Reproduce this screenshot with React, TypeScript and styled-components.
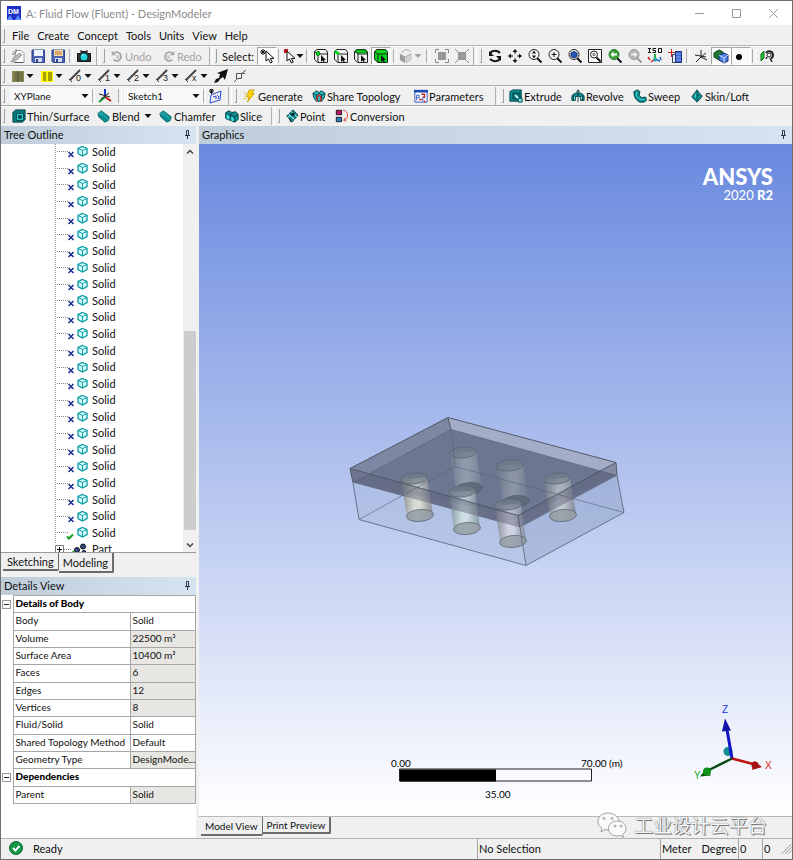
import React from "react";
import styled, { createGlobalStyle } from "styled-components";

const Global = createGlobalStyle`
  * { box-sizing: border-box; }
  html, body { margin: 0; height: 100%; }
  #root { height: 100%; }
  body, button, select, input {
    font-family: Lato, "Open Sans", sans-serif;
    font-size: 11px;
    color: #111;
  }
`;

const Window = styled.div`
  height: 100vh;
  display: flex;
  flex-direction: column;
  background: #f0f0f0;
  border: 1px solid #6e6e6e;
  overflow: hidden;
`;
const TitleBar = styled.header`
  flex: none;
  height: 24px;
  background: #fff;
  display: flex;
  align-items: center;
  padding-left: 6px;
  color: #8c8c8c;
`;
const TitleText = styled.h1`
  flex: 1;
  margin: 0 0 0 5px;
  font-size: 11px;
  font-weight: 400;
`;
const CaptionButton = styled.button`
  width: 37px;
  height: 24px;
  border: 0;
  padding: 0;
  background: none;
  display: grid;
  place-items: center;
`;
const Grip = styled.i<{ $gap?: number }>`
  flex: none;
  align-self: center;
  width: 2px;
  height: 14px;
  margin-left: 2px;
  margin-right: ${(p) => p.$gap ?? 4}px;
  border-right: 1px solid #a0a0a0;
  border-bottom: 1px solid #a0a0a0;
`;
const MenuBar = styled.nav`
  flex: none;
  height: 21px;
  display: flex;
  align-items: center;
  padding-top: 1px;
  border-bottom: 1px solid #b4b4b4;
`;
const MenuItem = styled.button`
  flex: none;
  border: 0;
  background: none;
  padding: 0 4px;
  line-height: 16px;
`;
const Bar = styled.div`
  flex: none;
  height: 20px;
  display: flex;
  align-items: center;
  border-top: 1px solid #fafafa;
  border-bottom: 1px solid #a8a8a8;
  &:last-of-type { border-bottom-color: #f0f0f0; }
`;
const Tool = styled.button<{ $w?: number; $on?: boolean; $off?: boolean }>`
  flex: none;
  display: flex;
  align-items: center;
  justify-content: ${(p) => (p.$w ? "flex-start" : "center")};
  width: ${(p) => p.$w ?? 20}px;
  height: 18px;
  padding: 0;
  white-space: nowrap;
  border: ${(p) => (p.$on ? "1px solid #a5a5a5" : "0")};
  border-right-color: #fff;
  border-bottom-color: #fff;
  background: ${(p) => (p.$on ? "#fafafa" : "none")};
  color: ${(p) => (p.$off ? "#a3a3a3" : "#111")};
  svg { flex: none; }
`;
const LabelTool = styled(Tool)`
  svg { width: 14px; height: 14px; margin-right: 1px; }
`;
const Divider = styled.i<{ $w: number; $end?: boolean }>`
  flex: none;
  width: ${(p) => p.$w}px;
  height: ${(p) => (p.$end ? 18 : 14)}px;
  display: flex;
  justify-content: center;
  &::before {
    content: "";
    width: 2px;
    border-left: 1px solid #b0b0b0;
    border-right: 1px solid #fff;
  }
`;
const BarLabel = styled.span`
  flex: none;
  width: 35px;
`;
const Combo = styled.label<{ $w: number }>`
  flex: none;
  width: ${(p) => p.$w}px;
  height: 17px;
  display: flex;
  align-items: center;
  padding-right: 3px;
  background: #f8f8f8;
  select {
    flex: 1;
    min-width: 0;
    border: 0;
    padding: 0 4px;
    background: none;
    appearance: none;
    font-size: 10px;
  }
`;
const Body = styled.main`
  flex: 1;
  min-height: 0;
  display: grid;
  grid-template-columns: 195px minmax(0, 1fr);
  column-gap: 3px;
`;
const Side = styled.aside`
  min-height: 0;
  display: flex;
  flex-direction: column;
`;
const PaneHead = styled.h2`
  flex: none;
  height: 18px;
  margin: 0;
  padding: 0 5px 2px 3px;
  display: flex;
  align-items: center;
  justify-content: space-between;
  background: linear-gradient(90deg, #bfcddb, #d6e4f2);
  font-size: 11px;
  font-weight: 400;
`;
const TreePane = styled.div`
  flex: none;
  height: 409px;
  display: flex;
  overflow: hidden;
  background: #fff;
  border-bottom: 1px solid #9a9a9a;
`;
const Tree = styled.ul`
  flex: 1;
  height: 414px;
  margin: 0 0 0 54px;
  padding: 0;
  list-style: none;
  display: flex;
  flex-direction: column;
  background: repeating-linear-gradient(180deg, #999 0 1px, #fff 1px 2px) 0 0 / 1px 400px no-repeat;
`;
const Node = styled.li`
  flex: 1;
  min-height: 0;
  display: flex;
  align-items: center;
  padding-bottom: 2px;
  svg { flex: none; margin-right: 4px; }
`;
const ScrollBar = styled.div`
  flex: none;
  width: 13px;
  display: flex;
  flex-direction: column;
  align-items: center;
  background: #f0f0f0;
`;
const ScrollArrow = styled.button`
  width: 12px;
  height: 14px;
  border: 0;
  padding: 0;
  background: none;
  display: grid;
  place-items: center;
`;
const Thumb = styled.div`
  width: 12px;
  height: 199px;
  margin-top: auto;
  margin-bottom: 8px;
  background: #cdcdcd;
`;
const Tabs = styled.div`
  flex: none;
  height: 24px;
  display: flex;
  align-items: flex-start;
  padding-left: 2px;
`;
const Tab = styled.button<{ $active?: boolean }>`
  height: ${(p) => (p.$active ? 20 : 18)}px;
  padding: 0 4px;
  background: #f0f0f0;
  border: 0 solid #6c6c6c;
  border-bottom-width: 2px;
  border-right-width: ${(p) => (p.$active ? 2 : 1)}px;
  border-radius: 0 0 2px 0;
`;
const Details = styled.div`
  flex: 1;
  min-height: 0;
  background: #fff;
`;
const Grid = styled.table`
  width: 100%;
  height: 209px;
  border-collapse: collapse;
  table-layout: fixed;
  font-size: 10px;
  td, th {
    padding: 0 0 2px 2px;
    line-height: 14px;
    border: 1px solid #a6a6a6;
    text-align: left;
    white-space: nowrap;
    font-weight: 400;
    overflow: hidden;
  }
`;
const Toggle = styled.td`
  && {
    border-width: 0 1px 0 0;
    padding: 0 0 0 1px;
    overflow: visible;
  }
`;
const ToggleButton = styled.button`
  width: 9px;
  height: 9px;
  padding: 0;
  background: #fff;
  border: 1px solid #999;
  display: grid;
  place-items: center;
  &::before { content: ""; width: 5px; height: 1px; background: #222; }
`;
const Section = styled.th`
  && { font-weight: 900; color: #000; }
`;
const Value = styled.td<{ $locked: boolean }>`
  background: ${(p) => (p.$locked ? "#e7e6e2" : "#fff")};
`;
const Stage = styled.section`
  min-width: 0;
  min-height: 0;
  display: flex;
  flex-direction: column;
`;
const Viewport = styled.div`
  flex: 1;
  min-height: 0;
  background: linear-gradient(180deg, #6989df, #fff);
  svg { display: block; width: 100%; height: 100%; }
`;
const ViewTabs = styled.div`
  flex: none;
  height: 22px;
  position: relative;
  display: flex;
  align-items: flex-start;
  border-top: 1px solid #b8b8b8;
  padding-left: 2px;
`;
const ViewTab = styled(Tab)`
  height: ${(p) => (p.$active ? 19 : 17)}px;
  font-size: 10px;
  border-right-width: ${(p) => (p.$active ? 1 : 2)}px;
`;
const Watermark = styled.div`
  position: absolute;
  right: 25px;
  top: -7px;
  display: flex;
  align-items: center;
  gap: 7px;
  font: 19px/30px "Noto Sans CJK SC", sans-serif;
  color: #f6f6f6;
  text-shadow: 1px 1px 0 #777, 0 0 1px #555;
`;
const Status = styled.footer`
  flex: none;
  height: 21px;
  display: flex;
  align-items: stretch;
  border-top: 1px solid #b0b0b0;
`;
const Cell = styled.span<{ $w?: number }>`
  flex: ${(p) => (p.$w ? "none" : "1")};
  width: ${(p) => (p.$w ? p.$w + "px" : "auto")};
  display: flex;
  align-items: center;
  gap: 10px;
  padding: 0 0 2px 1px;
  border-left: 1px solid #a5a5a5;
  white-space: nowrap;
  &:first-child { border-left: 0; padding-left: 8px; }
`;

const T = "#0b8f92";
const D = "#06393d";
const G = "#8a8a8a";

function Svg({ children, w = 16 }: { children: React.ReactNode; w?: number }) {
  return (
    <svg width={w} height="16" viewBox={`0 0 ${w} 16`} fill="none" aria-hidden="true">
      {children}
    </svg>
  );
}
const Caret = ({ off = false }: { off?: boolean }) => (
  <svg width="8" height="5" viewBox="0 0 8 5" aria-hidden="true">
    <path d="M.5 0h7L4 4z" fill={off ? "#a0a0a0" : "#111"} />
  </svg>
);
const Pin = () => (
  <svg width="7" height="9" viewBox="0 0 7 9" fill="none" stroke="#334" aria-hidden="true">
    <path d="M2.500 5V.5h2V5M4.500 1v4M1 5.500h5M3.500 6v3" />
  </svg>
);
const NewFile = () => (
  <Svg>
    <path d="M6 2.500h5l3 3v9H4z" fill="#fff" stroke="#999" />
    <path d="M1 14l3-5 6-4 2 2-5 5-4 2z" fill="#b5b8c2" stroke="#888" strokeWidth=".7" />
    <path d="M3 3l2 2M6 1v3M2 6h3" stroke="#777" />
    <path d="M5 14.500h8" stroke="#555" />
  </Svg>
);
const Save = ({ as = false }: { as?: boolean }) => (
  <Svg>
    <path d="M2 2h12.500v12.500H3l-1-1z" fill="#4a63b0" stroke="#29438e" />
    <path d="M4 2h9v6H4z" fill={as ? "#f3dfa4" : "#eef3fb"} />
    {as && <path d="M5 4h7M5 6h7" stroke="#c66b3c" />}
    <path d="M5 10h7v4H5z" fill="#d4dcef" />
    <path d="M6 11h2v3H6z" fill="#29438e" />
  </Svg>
);
const Camera = () => (
  <Svg>
    <path d="M1.500 5.500h3l1-2h5l1 2h3v8h-13z" fill="#333" stroke="#111" />
    <path d="M4 3h2M10 3h2" stroke="#111" />
    <circle cx="8" cy="9" r="4" fill="#20d7e2" stroke="#07363a" />
    <path d="M6 8l2-2" stroke="#dff" />
  </Svg>
);
const Turn = ({ redo = false }: { redo?: boolean }) => (
  <Svg>
    <g transform={redo ? "translate(16 0) scale(-1 1)" : undefined} stroke="#a7a7a7">
      <path d="M4 5a5 5 0 1 1 0 7" strokeWidth="2" />
      <path d="M2 2v5h5z" fill="#a7a7a7" stroke="none" />
      <path d="M7 8h4M7 10h3" />
    </g>
  </Svg>
);
const CursorPath = ({ x = 6, y = 3 }: { x?: number; y?: number }) => (
  <path
    transform={`translate(${x} ${y})`}
    d="M0 0v10l2.500-2 2 4 1.800-1-2-3.600H8z"
    fill="#fff"
    stroke="#111"
  />
);
const SelectMode = () => (
  <Svg>
    <path d="M1 4h6M4 1v6M2 2l4 4M6 2L2 6" stroke="#111" />
    <CursorPath x={7} y={3} />
  </Svg>
);
const BoxSelect = () => (
  <Svg w={13}>
    <path d="M1 1h4v4H1z" fill="#c21818" />
    <CursorPath x={4} y={3} />
  </Svg>
);
const Filter = ({ kind }: { kind: "point" | "edge" | "face" | "body" }) => {
  const body = kind === "body";
  const g = "#08d81d";
  return (
    <Svg>
      <path d="M1.500 3.500L4 1.500h8.500l2 2.500v10.500H5l-3.500-3z" fill={body ? g : "#f4f4f4"} stroke="#222" />
      <path d="M1.500 3.500l3.500 2.500h9.500M5 6v8.500" stroke="#222" />
      {kind === "face" && <path d="M2 3.500L4 2h8.500l1.500 3H5z" fill={g} stroke="#087a10" />}
      {kind === "edge" && <path d="M2 3.500l4 2.500" stroke={g} strokeWidth="3" />}
      {kind === "point" && <circle cx="5" cy="5.500" r="2" fill={g} stroke="#087a10" />}
      <path d="M8 7v7l1.600-1.500 1 1.700 1.200-.6-1-1.700H13z" fill="#111" />
    </Svg>
  );
};
const GreyCube = () => (
  <Svg>
    <path d="M2 6l5 3v6l-5-3z" fill="#9a9a9a" />
    <path d="M8 9l5-3v6l-5 3z" fill="#d5d5d5" stroke="#b0b0b0" strokeWidth=".6" />
    <path d="M4 5c1-4 6-4 9-1M2 6l5 3 6-3" stroke="#aaa" />
  </Svg>
);
const Expand = ({ inward = false }: { inward?: boolean }) => (
  <Svg>
    <path d="M4 4h8v8H4z" fill="#999" />
    {inward ? (
      <path d="M1 1l4 4M15 1l-4 4M1 15l4-4M15 15l-4-4" stroke={G} />
    ) : (
      <path d="M1.500 5V1.500H5M11 1.500h3.500V5M14.500 11v3.500H11M5 14.500H1.500V11" stroke={G} />
    )}
  </Svg>
);
const Rotate = () => (
  <Svg>
    <path d="M3 6c1-4 7-4 10-1M13 10c-1 4-7 4-10 1" stroke="#111" strokeWidth="2" />
    <path d="M2 3v5h5zM14 13V8H9z" fill="#111" />
  </Svg>
);
const Pan = () => (
  <Svg>
    <path d="M8 3v3M8 10v3M3 8h3M10 8h3" stroke="#111" />
    <path d="M8 1l2.500 3h-5zM8 15l2.500-3h-5zM1 8l3-2.500v5zM15 8l-3-2.500v5z" fill="#111" />
  </Svg>
);
const Lens = ({ kind }: { kind: "zoom" | "in" | "fit" | "box" | "prev" | "next" }) => {
  const ring = kind === "prev" ? "#1f7d20" : kind === "next" ? "#9a9a9a" : "#222";
  const fill = kind === "prev" ? "#3a9d38" : kind === "next" ? "#b5b5b5" : "#f8f8f8";
  return (
    <Svg>
      {kind === "box" && <path d="M1.500 1.500h13v13h-13z" stroke="#222" fill="#fff" />}
      <path d={kind === "box" ? "M9.500 9.500l4 4" : "M10 10l4.500 4.500"} stroke={kind === "next" ? "#999" : "#111"} strokeWidth="2" />
      <circle cx="7" cy="6.500" r={kind === "box" ? 3.5 : 5} fill={fill} stroke={ring} />
      {kind === "zoom" && <path d="M7 2.500l2 3H5zM7 10.500l2-3H5z" fill="#111" />}
      {kind === "in" && <path d="M7 4v5M4.500 6.500h5" stroke="#111" />}
      {kind === "fit" && <path d="M7 3.500l3 1.500v3.500l-3 1.500-3-1.500V5z" fill="#2456b8" stroke="#112a66" />}
      {kind === "box" && <path d="M6 5.500h2v2H6z" stroke="#777" />}
      {kind === "prev" && <path d="M3.500 6.500l3-3v2h3.500v2H6.500v2z" fill="#fff" />}
      {kind === "next" && <path d="M10.500 6.500l-3-3v2H4v2h3.500v2z" fill="#eee" />}
    </Svg>
  );
};
const Iso = () => (
  <Svg>
    <path d="M1 .5h3M2.500 0v5M1 4.500h3M9 .5H6v2h2.500v2H5.500M11.500.5h3v4h-3z" stroke="#111" />
    <path d="M8 6v5" stroke="#22b14c" strokeWidth="2" />
    <path d="M8 11l-4 3M1 9l2 3" stroke="#c22" strokeWidth="1.500" />
    <path d="M8 11l5 2M13 9l1 3" stroke="#1769c9" strokeWidth="1.500" />
    <path d="M6.500 9.500h3v4h-3z" fill="#20a8a8" />
  </Svg>
);
const LookAt = () => (
  <Svg>
    <path d="M5.500 6.500h3v8h-3z" fill="#e6eeff" stroke="#345" />
    <path d="M8.500 3.500h6v11h-6z" fill="#3e67d0" stroke="#14307d" />
    <path d="M9 6h5M9 9h5M9 12h5" stroke="#7fa4ee" />
    <path d="M4.500 1v8M1 4.500h7" stroke="#c22" />
  </Svg>
);
const Axes = () => (
  <Svg>
    <path d="M8 2v7L3 14M8 9l6 3M2 7l11 2M8 9l5-4" stroke="#222" />
  </Svg>
);
const Solids = () => (
  <Svg>
    <path d="M1 5l5-3 4 2v7l-4 1-5-3z" fill="#1e7b2c" stroke="#0c3514" />
    <path d="M6 7l5-2 4 2v6l-4 2-5-3z" fill="#4c7de0" stroke="#112c6b" />
    <path d="M6 7l5 3 4-3M11 10v5" stroke="#cfe0ff" />
  </Svg>
);
const Dot = () => (
  <Svg>
    <circle cx="6" cy="9" r="3" fill="#000" />
  </Svg>
);
const Inspect = () => (
  <Svg>
    <path d="M2 6l3-3v7l-3 3z" fill="#23c332" stroke="#0a6a12" />
    <path d="M7 5c2-3 7-2 7 2 0 2-1 3-2 3" stroke="#222" strokeWidth="2" />
    <circle cx="10" cy="7" r="2" stroke="#222" fill="#fff" />
    <path d="M11 10l2 4M8 9l-1 2" stroke="#222" strokeWidth="1.500" />
  </Svg>
);
const Frozen = ({ yellow = false }: { yellow?: boolean }) => (
  <Svg>
    <path d="M2 3h12v11H2z" fill={yellow ? "#ffff00" : "#8a8a54"} />
    <path d="M4 4h3.500v9H4zM9 4h4v9H9z" fill={yellow ? "#a8a000" : "#74744a"} />
    <path d="M8 3v11" stroke={yellow ? "#ff0" : "#42422a"} />
  </Svg>
);
const EdgeColor = ({ n }: { n: string }) => (
  <Svg>
    <path d="M2 12L12 2" stroke="#444" strokeWidth="2" />
    <path d="M1 11l3 3" stroke="#333" />
    <text x="8" y="13" fontSize="9" fontFamily="Liberation Sans" fill="#222">{n}</text>
  </Svg>
);
const FatArrow = () => (
  <Svg>
    <path d="M1 15l2-4 3-1 1-4-3-1 11-4-3 11-2-3-3 2-2 3z" fill="#111" />
  </Svg>
);
const Vertex = () => (
  <Svg>
    <path d="M3.500 5.500h5v5h-5zM8 6l5-4M4 11l-3 3M8 5.500h4" stroke="#555" />
  </Svg>
);
const PlaneAxes = () => (
  <Svg>
    <path d="M8 1v8" stroke="#1734d5" strokeWidth="2" />
    <path d="M8 9l6 4" stroke="#c31717" strokeWidth="2" />
    <path d="M8 9l-6 5" stroke="#119b2a" strokeWidth="2" />
    <path d="M2 6l11 3M4 11l8-6" stroke="#222" />
  </Svg>
);
const NewSketch = () => (
  <Svg>
    <path d="M3 7l10-4-1 9-10 3z" stroke="#2b45d4" />
    <path d="M5 9l3-1v3M9 7l2 2-1 2" stroke="#2b45d4" />
    <path d="M1 3h5M3.500 1v5M2 1l3 4M5 1L2 5" stroke="#111" />
  </Svg>
);
const Bolt = () => (
  <Svg>
    <path d="M7 1h6l-3 4h3L5 15l2-6H4z" fill="#ffd400" stroke="#b98500" strokeWidth=".7" />
    <path d="M1 5h3M2 8h2M1 11h3" stroke="#e6b800" />
  </Svg>
);
const Share = () => (
  <Svg>
    <path d="M1 5l4-3 3 2 3-2 4 3-1 5-3 4H5l-3-4z" fill="#27b9b9" stroke={D} />
    <path d="M1 5l4 2 3-2 3 2 4-2M5 7v5M11 7v5" stroke={D} />
    <path d="M6 14V9l2-2 2 2v5" stroke="#d22" strokeWidth="1.500" />
  </Svg>
);
const Params = () => (
  <Svg>
    <path d="M1 2h14v13H1z" fill="#fff" stroke="#1b48b7" />
    <path d="M0 1h16v3H0z" fill="#1b48b7" />
    <path d="M3 13V7h3v3H3M8 6h2M10 14v-4h3" stroke="#234bc2" />
    <path d="M9 6h3v3h-2M6 12h3M12 13v2" stroke="#c22" strokeWidth="1.500" />
  </Svg>
);
const Extrude = () => (
  <Svg>
    <path d="M1 3l3-2h10v9l-3 4H1z" fill={T} stroke={D} />
    <path d="M4.500 4.500h8v7h-8z" fill="#087679" stroke={D} />
    <path d="M7 7l5 5" stroke="#dff" strokeWidth="2" />
    <path d="M10.500 10.500h4.500v4.500h-4.500z" fill="#65e5e5" stroke={D} />
  </Svg>
);
const Revolve = () => (
  <Svg>
    <path d="M1 9c0-6 14-6 14 0v4h-4V9L8 8 5 9v4H1z" fill={T} stroke={D} />
    <path d="M3 7v6M13 7v6M8 1v14M6 4l2-3 2 3" stroke={D} />
    <path d="M4 9v3M12 9v3" stroke="#8ff" />
  </Svg>
);
const Sweep = () => (
  <Svg>
    <path d="M1 3l4-2 3 2-1 4 3 3 4-1 2 3-3 3H8c-5-2-7-6-7-12z" fill={T} stroke={D} />
    <path d="M4 3l0 5 4 4h5" stroke="#52d5d5" />
  </Svg>
);
const Loft = () => (
  <Svg>
    <path d="M8 1l3 4 3 3-3 4-3 3-3-3-3-3 3-4z" fill={T} stroke={D} />
    <path d="M8 1v14M5 6l3 2 4-2M5 12l3-2" stroke="#056" />
    <path d="M7 4L5 8l2 4z" fill="#43cdcd" />
  </Svg>
);
const Thin = () => (
  <Svg>
    <path d="M1 4l3-3h11v11l-3 3H1z" fill="#087b7e" stroke={D} />
    <path d="M5 5h8v8H5z" fill="#36cfcf" stroke={D} />
    <path d="M7.500 7.500h3v3h-3z" fill="#056" stroke={D} />
  </Svg>
);
const Blend = () => (
  <Svg>
    <path d="M1 5l4-3 9 7-1 4-4 2-7-6z" fill={T} stroke="#08666a" />
    <path d="M5 2l1 4 7 6M1 5l5 1" stroke="#35b7b7" />
  </Svg>
);
const Slice = () => (
  <Svg>
    <path d="M0 5l4-3 4 2 4-1 3 3v6l-4 3-5-2-5-2z" fill={T} stroke={D} />
    <path d="M1 5l5 2v6M6 7l3-3M11 15V9l4-3M6 7l5 2" stroke={D} />
    <path d="M2 6l3 2v4l-3-1zM7 9l3 1v4l-3-1z" fill="#45e6e6" />
  </Svg>
);
const Point = () => (
  <Svg>
    <path d="M2 8l7-7 6 6-7 8z" fill={T} stroke={D} />
    <path d="M1 12l4-4M4 6l7 6M7 3l7 6" stroke="#dff" />
    <circle cx="9" cy="6" r="2" fill="#06282b" />
    <path d="M6 15v-4" stroke="#111" />
  </Svg>
);
const Convert = () => (
  <Svg>
    <path d="M1.500 1.500h6v5h-6z" fill="#c0126b" stroke="#111" />
    <path d="M1.500 9.500h6v5h-6z" fill="#2482c8" stroke="#111" />
    <path d="M9 1c7 1 7 11 1 12M12 10l-2 3 3 1" stroke="#d33" />
  </Svg>
);
const NodeIcon = ({ ok = false }: { ok?: boolean }) => (
  <svg width="33" height="16" viewBox="0 0 33 16" fill="none" aria-hidden="true">
    <path d="M2 8.500h12" stroke="#888" strokeDasharray="1 1" />
    {ok ? (
      <path d="M12 12.500l2 2 4-4" stroke="#159a22" strokeWidth="2" />
    ) : (
      <path d="M13.500 9l5 5M18.500 9l-5 5" stroke="#1a2f91" strokeWidth="1.500" />
    )}
    <path d="M27.500 3.500l4.500 2v5l-4.500 2.500-4.500-2.500v-5z" fill="#d9ffff" stroke="#0b9ba3" strokeWidth="1.300" />
    <path d="M23 5.500l4.500 2 4.500-2M27.500 7.500v5" stroke="#0b9ba3" />
  </svg>
);
const PartIcon = () => (
  <svg width="33" height="16" viewBox="0 0 33 16" fill="none" aria-hidden="true">
    <path d="M.5 4.500h8v8h-8z" fill="#fff" stroke="#777" />
    <path d="M2 8.500h5M4.500 6v5" stroke="#111" />
    <path d="M9 8.500h7" stroke="#888" strokeDasharray="1 1" />
    <g fill="#334a8a" stroke="#111">
      <circle cx="22" cy="9" r="2.500" />
      <circle cx="28" cy="5.500" r="2.500" />
      <circle cx="29" cy="11.500" r="2" />
    </g>
    <path d="M16 14l3-4" stroke="#1b9c28" strokeWidth="2" />
  </svg>
);

const menus = ["File", "Create", "Concept", "Tools", "Units", "View", "Help"];
const cylinders = [
  { x: 463, y: 452, bx: 469, by: 488, tone: "cool", inside: true },
  { x: 510, y: 465, bx: 516, by: 501, tone: "grey", inside: true },
  { x: 414, y: 478, bx: 420, by: 515, tone: "warm", inside: false },
  { x: 557, y: 478, bx: 563, by: 515, tone: "grey", inside: false },
  { x: 462, y: 491, bx: 467, by: 528, tone: "cool", inside: false },
  { x: 508, y: 504, bx: 513, by: 541, tone: "lilac", inside: false },
];
const tones: Record<string, [string, string, string]> = {
  cool: ["#788b94", "#cfe0e2", "#7f929b"],
  grey: ["#767d88", "#c6cbd0", "#7a828f"],
  warm: ["#80847f", "#dcddd2", "#7f8589"],
  lilac: ["#7c8290", "#d2d5e2", "#7f8698"],
};

function Scene() {
  return (
    <svg viewBox="199 144 593 671" preserveAspectRatio="xMidYMid meet" fontFamily="Lato, sans-serif">
      <defs>
        {Object.entries(tones).map(([k, c]) => (
          <linearGradient key={k} id={k}>
            <stop offset="0" stopColor={c[0]} />
            <stop offset=".42" stopColor={c[1]} />
            <stop offset=".6" stopColor={c[1]} />
            <stop offset="1" stopColor={c[2]} />
          </linearGradient>
        ))}
      </defs>
      <g textAnchor="end" fill="#fff">
        <text x="773" y="184" fontSize="22" fontWeight="900">ANSYS</text>
        <text x="773" y="199" fontSize="13">2020 <tspan fontWeight="900">R2</tspan></text>
      </g>

      <path d="M353 482L520 527 617 475 624 512 526 565 359 519z" fill="#9fb2cf" opacity=".32" />
      <path d="M520 527l97-52 7 37-98 53z" fill="#8a9cc2" opacity=".28" />
      <path d="M350 468L448 417l168 45 1 13-97 52-167-45z" fill="#707b95" />
      <path d="M448 417l168 45 1 13-166-46z" fill="#a4adc7" />
      <path d="M448 417L350 468l3 14 98-53z" fill="#7d86a3" />
      <g stroke="#56606c" strokeWidth=".7">
        {cylinders.map((c) => (
          <g key={`${c.x}-${c.y}`}>
            <path
              d={`M${c.x - 13} ${c.y + 1}L${c.bx - 13} ${c.by + 1}A13.500 6 -5 0 0 ${c.bx + 13} ${c.by - 1}L${c.x + 13} ${c.y - 1}z`}
              fill={`url(#${c.tone})`}
              stroke="none"
              opacity={c.inside ? 0.45 : 0.9}
            />
            <ellipse cx={c.x} cy={c.y} rx="13.500" ry="5.500" transform={`rotate(-5 ${c.x} ${c.y})`} fill="#77838f" fillOpacity=".7" />
            <ellipse
              cx={c.bx}
              cy={c.by}
              rx="13.500"
              ry="6"
              transform={`rotate(-5 ${c.bx} ${c.by})`}
              fill={c.inside ? "#59636f" : "#949da6"}
              fillOpacity=".85"
            />
          </g>
        ))}
      </g>
      <path d="M350 468l168 47 98-53 1 13-97 52-167-45z" fill="#5d6078" opacity=".42" />
      <path d="M353 482L451 429l166 46-97 40-2 0z" fill="#5a6780" opacity=".2" />
      <g fill="none" stroke="#4c5361" strokeWidth=".9">
        <path d="M350 468L448 417l168 45-98 53zM350 468l3 14M448 417l3 12M616 462l1 13M518 515l2 12" />
        <path d="M353 482l6 37 167 46 98-53-7-37M520 527l6 38" stroke="#5e6c80" />
        <path d="M353 482l98-53 166 46M451 429l4 37-96 53M455 466l169 46" stroke="#566275" strokeWidth=".6" />
      </g>

      <g fontSize="10" fill="#000">
        <text x="391" y="766">0.00</text>
        <text x="581" y="766">70.00 (m)</text>
        <text x="485" y="797">35.00</text>
      </g>
      <path d="M399.500 768.500h192v12h-192z" fill="#fafbff" stroke="#222" />
      <path d="M400 769h96v12h-96z" />

      <circle cx="728" cy="751" r="4.500" fill="#138e96" />
      <path d="M732 758l-5-29" stroke="#1414c8" strokeWidth="3" />
      <path d="M725 718l6 12-9 1z" fill="#1212a8" />
      <path d="M732 758l23 6" stroke="#c01010" strokeWidth="2.500" />
      <path d="M762 766.500l-10 3 2-9z" fill="#a31010" />
      <circle cx="755" cy="764.500" r="3.500" fill="#a31010" />
      <path d="M732 758l-24 12" stroke="#0b4a10" strokeWidth="2.500" />
      <path d="M700 776l6-8 5 7z" fill="#075b0c" />
      <circle cx="707" cy="771" r="4" fill="#109018" />
      <g fontSize="10" fontFamily="Liberation Sans, sans-serif">
        <text x="722" y="712" fill="#2233e8">Z</text>
        <text x="765" y="768" fill="#e02020">X</text>
        <text x="694" y="778" fill="#19a51f">Y</text>
      </g>
    </svg>
  );
}

type Row = [string, string, boolean];
const bodyRows: Row[] = [
  ["Body", "Solid", false],
  ["Volume", "22500 m³", true],
  ["Surface Area", "10400 m²", true],
  ["Faces", "6", true],
  ["Edges", "12", true],
  ["Vertices", "8", true],
  ["Fluid/Solid", "Solid", false],
  ["Shared Topology Method", "Default", false],
  ["Geometry Type", "DesignMode...", true],
];

function DetailSection({ title, rows }: { title: string; rows: Row[] }) {
  return (
    <tbody>
      <tr>
        <Toggle><ToggleButton aria-label={`Collapse ${title}`} /></Toggle>
        <Section colSpan={2}>{title}</Section>
      </tr>
      {rows.map(([k, v, locked]) => (
        <tr key={k}>
          <Toggle />
          <th scope="row">{k}</th>
          <Value $locked={locked}>{v}</Value>
        </tr>
      ))}
    </tbody>
  );
}

export default function App() {
  return (
    <>
      <Global />
      <Window>
        <TitleBar>
          <svg width="14" height="14" viewBox="0 0 14 14" aria-hidden="true">
            <path d="M0 0h14v14H0z" fill="#1c2ec4" />
            <path d="M3 9l3 5H0zM11 9l3 5H8z" fill="#5c8cff" />
            <text x="1" y="8" fontSize="7" fontWeight="700" fontFamily="Liberation Sans" fill="#fff">DM</text>
          </svg>
          <TitleText>A: Fluid Flow (Fluent) - DesignModeler</TitleText>
          <CaptionButton aria-label="Minimize"><svg width="9" height="9"><path d="M0 4.500h9" stroke="#999" /></svg></CaptionButton>
          <CaptionButton aria-label="Maximize"><svg width="9" height="9"><path d="M.5.5h8v8h-8z" fill="none" stroke="#999" /></svg></CaptionButton>
          <CaptionButton aria-label="Close"><svg width="9" height="9"><path d="M0 0l9 9M9 0L0 9" stroke="#999" /></svg></CaptionButton>
        </TitleBar>

        <MenuBar>
          <Grip $gap={3} />
          {menus.map((m) => <MenuItem key={m}>{m}</MenuItem>)}
        </MenuBar>

        <div>
          <Bar>
            <Grip $gap={3} />
            <Tool aria-label="New"><NewFile /></Tool>
            <Tool aria-label="Save"><Save /></Tool>
            <Tool aria-label="Save as"><Save as /></Tool>
            <Divider $w={6} />
            <Tool aria-label="Capture"><Camera /></Tool>
            <Divider $w={7} $end />
            <Grip $gap={5} />
            <LabelTool $w={52} $off><Turn />Undo</LabelTool>
            <LabelTool $w={46} $off><Turn redo />Redo</LabelTool>
            <Divider $w={5} $end />
            <Grip $gap={5} />
            <BarLabel>Select:</BarLabel>
            <Tool $on aria-label="Single select"><SelectMode /></Tool>
            <Divider $w={6} />
            <Tool $w={22} aria-label="Selection mode"><BoxSelect /><Caret /></Tool>
            <Divider $w={6} />
            <Tool aria-label="Points"><Filter kind="point" /></Tool>
            <Tool aria-label="Edges"><Filter kind="edge" /></Tool>
            <Tool aria-label="Faces"><Filter kind="face" /></Tool>
            <Tool $on aria-label="Bodies"><Filter kind="body" /></Tool>
            <Divider $w={7} />
            <Tool $w={26} aria-label="Extend"><GreyCube /><Caret off /></Tool>
            <Divider $w={8} />
            <Tool aria-label="Expand selection"><Expand /></Tool>
            <Tool aria-label="Shrink selection"><Expand inward /></Tool>
            <Divider $w={6} $end />
            <Grip $gap={3} />
            <Tool aria-label="Rotate"><Rotate /></Tool>
            <Tool aria-label="Pan"><Pan /></Tool>
            <Tool aria-label="Zoom"><Lens kind="zoom" /></Tool>
            <Tool aria-label="Box zoom"><Lens kind="in" /></Tool>
            <Tool aria-label="Zoom to fit"><Lens kind="fit" /></Tool>
            <Tool aria-label="Magnifier"><Lens kind="box" /></Tool>
            <Tool aria-label="Previous view"><Lens kind="prev" /></Tool>
            <Tool aria-label="Next view"><Lens kind="next" /></Tool>
            <Tool aria-label="Isometric view"><Iso /></Tool>
            <Tool aria-label="Look at"><LookAt /></Tool>
            <Divider $w={6} />
            <Tool aria-label="Display plane"><Axes /></Tool>
            <Tool $on aria-label="Display model"><Solids /></Tool>
            <Tool $on aria-label="Display points"><Dot /></Tool>
            <Divider $w={6} />
            <Tool aria-label="Inspect"><Inspect /></Tool>
          </Bar>
          <Bar>
            <Grip $gap={5} />
            <Tool $w={29} aria-label="Frozen"><Frozen /><Caret /></Tool>
            <Tool $w={29} aria-label="Highlight"><Frozen yellow /><Caret /></Tool>
            {["0", "1", "2", "3", "x"].map((n) => (
              <Tool $w={29} key={n} aria-label={`Edge joints ${n}`}><EdgeColor n={n} /><Caret /></Tool>
            ))}
            <Tool $w={18} aria-label="Edge direction"><FatArrow /></Tool>
            <Tool aria-label="Vertices"><Vertex /></Tool>
          </Bar>
          <Bar>
            <Grip $gap={5} />
            <Combo $w={82}><select aria-label="Plane"><option>XYPlane</option></select><Caret /></Combo>
            <Divider $w={3} />
            <Tool aria-label="New plane"><PlaneAxes /></Tool>
            <Divider $w={9} />
            <Combo $w={79}><select aria-label="Sketch"><option>Sketch1</option></select><Caret /></Combo>
            <Divider $w={3} />
            <Tool aria-label="New sketch"><NewSketch /></Tool>
            <Divider $w={7} $end />
            <Grip $gap={6} />
            <LabelTool $w={69}><Bolt />Generate</LabelTool>
            <LabelTool $w={102}><Share />Share Topology</LabelTool>
            <LabelTool $w={80}><Params />Parameters</LabelTool>
            <Divider $w={6} $end />
            <Grip $gap={5} />
            <LabelTool $w={62}><Extrude />Extrude</LabelTool>
            <LabelTool $w={62}><Revolve />Revolve</LabelTool>
            <LabelTool $w={57}><Sweep />Sweep</LabelTool>
            <LabelTool $w={64}><Loft />Skin/Loft</LabelTool>
          </Bar>
          <Bar>
            <Grip $gap={7} />
            <LabelTool $w={85}><Thin />Thin/Surface</LabelTool>
            <LabelTool $w={47}><Blend />Blend</LabelTool>
            <Tool $w={15} aria-label="Blend options"><Caret /></Tool>
            <LabelTool $w={66}><Blend />Chamfer</LabelTool>
            <LabelTool $w={44}><Slice />Slice</LabelTool>
            <Divider $w={7} $end />
            <Grip $gap={5} />
            <LabelTool $w={50}><Point />Point</LabelTool>
            <LabelTool $w={76}><Convert />Conversion</LabelTool>
          </Bar>
        </div>

        <Body>
          <Side>
            <PaneHead>Tree Outline<Pin /></PaneHead>
            <TreePane>
              <Tree>
                {Array.from({ length: 24 }, (_, i) => (
                  <Node key={i}><NodeIcon ok={i === 23} />Solid</Node>
                ))}
                <Node><PartIcon />Part</Node>
              </Tree>
              <ScrollBar>
                <ScrollArrow aria-label="Scroll up"><svg width="8" height="5"><path d="M1 4.500l3-3 3 3" fill="none" stroke="#444" strokeWidth="1.500" /></svg></ScrollArrow>
                <Thumb />
                <ScrollArrow aria-label="Scroll down"><svg width="8" height="5"><path d="M1 .5l3 3 3-3" fill="none" stroke="#444" strokeWidth="1.500" /></svg></ScrollArrow>
              </ScrollBar>
            </TreePane>
            <Tabs>
              <Tab>Sketching</Tab>
              <Tab $active>Modeling</Tab>
            </Tabs>
            <PaneHead>Details View<Pin /></PaneHead>
            <Details>
              <Grid>
                <colgroup><col style={{ width: 12 }} /><col style={{ width: 117 }} /><col /></colgroup>
                <DetailSection title="Details of Body" rows={bodyRows} />
                <DetailSection title="Dependencies" rows={[["Parent", "Solid", true]]} />
              </Grid>
            </Details>
          </Side>
          <Stage>
            <PaneHead>Graphics<Pin /></PaneHead>
            <Viewport><Scene /></Viewport>
            <ViewTabs>
              <ViewTab $active>Model View</ViewTab>
              <ViewTab>Print Preview</ViewTab>
              <Watermark>
                <svg width="30" height="26" viewBox="0 0 30 26" fill="#fafafa" stroke="#8a8a8a" strokeWidth=".8" aria-hidden="true">
                  <path d="M11 1C5 1 1 5 1 9.500c0 3 1.500 5 4 6.500l-1 4 4-2.500c8 1.500 14-2 14-8C22 5 17 1 11 1z" />
                  <path d="M20.500 9c-5 0-9 3-9 7.500s4 7.500 9 7.500l3-.5 3 1.800-.8-3c2-1.500 3.300-3.500 3.300-5.800 0-4.500-4-7.500-8.500-7.500z" />
                  <circle cx="7" cy="6.500" r="1" /><circle cx="15" cy="6.500" r="1" />
                  <circle cx="18" cy="14" r="1" /><circle cx="24" cy="14" r="1" />
                </svg>
                工业设计云平台
              </Watermark>
            </ViewTabs>
          </Stage>
        </Body>

        <Status>
          <Cell>
            <svg width="14" height="14" viewBox="0 0 14 14" aria-hidden="true">
              <circle cx="7" cy="7" r="6.500" fill="#159447" stroke="#0b6a30" />
              <path d="M4 7l2.500 2.500L10.500 5" fill="none" stroke="#fff" strokeWidth="2" />
            </svg>
            Ready
          </Cell>
          <Cell $w={183}>No Selection</Cell>
          <Cell $w={78}>Meter<span>Degree</span></Cell>
          <Cell $w={24}>0</Cell>
          <Cell $w={30}>0
            <svg width="14" height="14" viewBox="0 0 14 14" aria-hidden="true"><path d="M2 14L14 2M6 14l8-8M10 14l4-4" stroke="#888" /></svg>
          </Cell>
        </Status>
      </Window>
    </>
  );
}
